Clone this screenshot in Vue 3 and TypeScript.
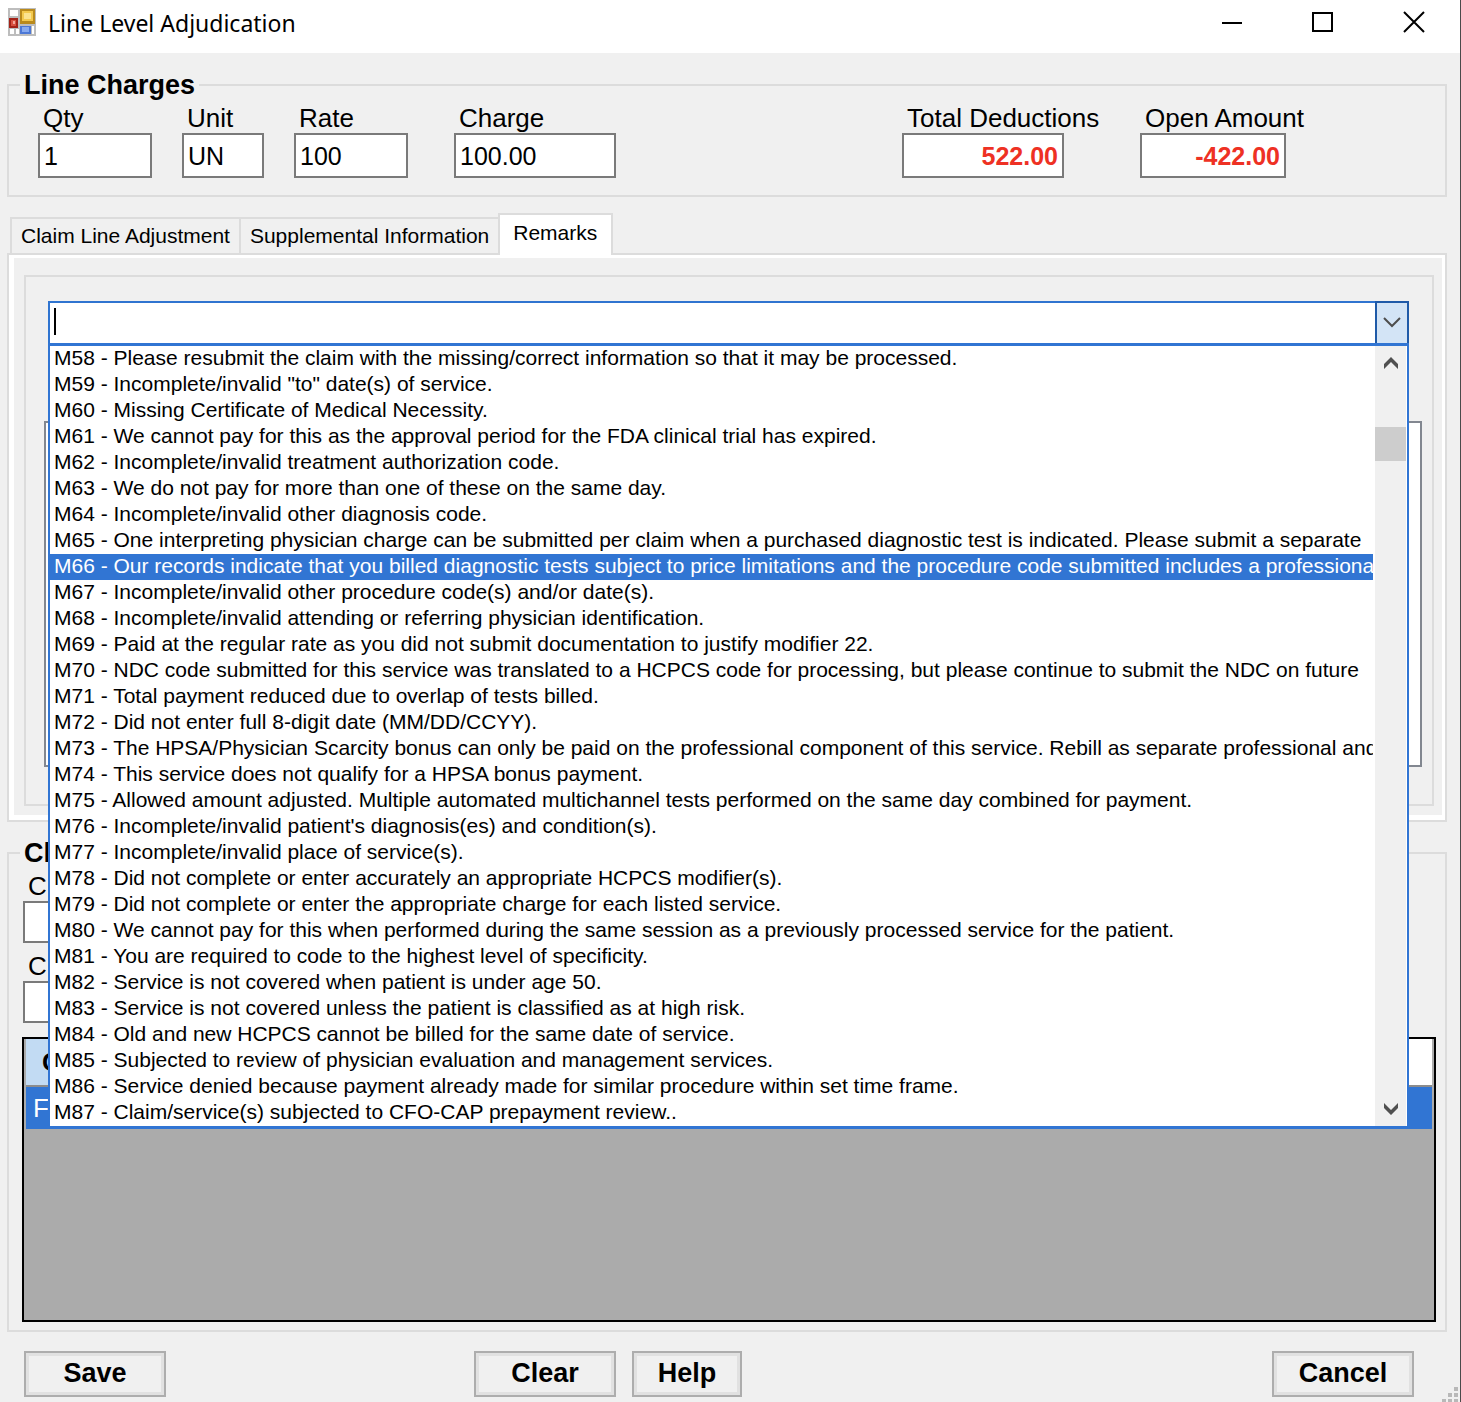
<script setup lang="ts">
import { ref } from 'vue'

interface Field {
  id: string
  label: string
  value: string
  size: string
}

const charges: Field[] = [
  { id: 'qty', label: 'Qty', value: '1', size: 'medium' },
  { id: 'unit', label: 'Unit', value: 'UN', size: 'small' },
  { id: 'rate', label: 'Rate', value: '100', size: 'medium spaced' },
  { id: 'charge', label: 'Charge', value: '100.00', size: 'large' },
]

const totals: Field[] = [
  { id: 'deductions', label: 'Total Deductions', value: '522.00', size: 'large' },
  { id: 'open', label: 'Open Amount', value: '-422.00', size: 'total' },
]

const tabs: string[] = ['Claim Line Adjustment', 'Supplemental Information', 'Remarks']
const activeTab = ref('Remarks')

const remarks: string[] = [
  'M58 - Please resubmit the claim with the missing/correct information so that it may be processed.',
  'M59 - Incomplete/invalid "to" date(s) of service.',
  'M60 - Missing Certificate of Medical Necessity.',
  'M61 - We cannot pay for this as the approval period for the FDA clinical trial has expired.',
  'M62 - Incomplete/invalid treatment authorization code.',
  'M63 - We do not pay for more than one of these on the same day.',
  'M64 - Incomplete/invalid other diagnosis code.',
  'M65 - One interpreting physician charge can be submitted per claim when a purchased diagnostic test is indicated. Please submit a separate',
  'M66 - Our records indicate that you billed diagnostic tests subject to price limitations and the procedure code submitted includes a professional',
  'M67 - Incomplete/invalid other procedure code(s) and/or date(s).',
  'M68 - Incomplete/invalid attending or referring physician identification.',
  'M69 - Paid at the regular rate as you did not submit documentation to justify modifier 22.',
  'M70 - NDC code submitted for this service was translated to a HCPCS code for processing, but please continue to submit the NDC on future',
  'M71 - Total payment reduced due to overlap of tests billed.',
  'M72 - Did not enter full 8-digit date (MM/DD/CCYY).',
  'M73 - The HPSA/Physician Scarcity bonus can only be paid on the professional component of this service. Rebill as separate professional and',
  'M74 - This service does not qualify for a HPSA bonus payment.',
  'M75 - Allowed amount adjusted. Multiple automated multichannel tests performed on the same day combined for payment.',
  "M76 - Incomplete/invalid patient's diagnosis(es) and condition(s).",
  'M77 - Incomplete/invalid place of service(s).',
  'M78 - Did not complete or enter accurately an appropriate HCPCS modifier(s).',
  'M79 - Did not complete or enter the appropriate charge for each listed service.',
  'M80 - We cannot pay for this when performed during the same session as a previously processed service for the patient.',
  'M81 - You are required to code to the highest level of specificity.',
  'M82 - Service is not covered when patient is under age 50.',
  'M83 - Service is not covered unless the patient is classified as at high risk.',
  'M84 - Old and new HCPCS cannot be billed for the same date of service.',
  'M85 - Subjected to review of physician evaluation and management services.',
  'M86 - Service denied because payment already made for similar procedure within set time frame.',
  'M87 - Claim/service(s) subjected to CFO-CAP prepayment review..',
]
const selected = ref(8)
</script>

<template>
  <div class="window">
    <header class="titlebar">
      <svg class="app-icon" width="28" height="28" viewBox="0 0 28 28" aria-hidden="true">
        <rect width="28" height="28" fill="#bdbdbd" />
        <rect x="2" y="2" width="8" height="6" fill="#fff" />
        <rect x="2" y="21" width="4" height="5" fill="#fff" />
        <rect x="8" y="21" width="3" height="5" fill="#fff" />
        <rect x="24" y="18" width="2" height="8" fill="#fff" />
        <rect x="12" y="1" width="15" height="15" fill="#b98a1c" />
        <rect x="14" y="3" width="11" height="10" fill="#f3c94e" />
        <rect x="16" y="5" width="7" height="6" fill="#fbe390" />
        <rect x="1" y="10" width="9" height="10" fill="#a32318" />
        <rect x="3" y="12" width="5" height="6" fill="#d8503f" />
        <rect x="5" y="13" width="2" height="3" fill="#f3a79a" />
        <rect x="12" y="18" width="11" height="8" fill="#4c78d6" />
        <rect x="14" y="19" width="7" height="5" fill="#86a9ef" />
      </svg>
      <h1>Line Level Adjudication</h1>
      <div class="controls">
        <button type="button" aria-label="Minimize">
          <svg width="22" height="24" viewBox="0 0 22 24"><path d="M1 13H21" stroke="#000" stroke-width="2" /></svg>
        </button>
        <button type="button" aria-label="Maximize">
          <svg width="22" height="24" viewBox="0 0 22 24"><rect x="1" y="3" width="19" height="18" fill="none" stroke="#000" stroke-width="2" /></svg>
        </button>
        <button type="button" aria-label="Close">
          <svg width="22" height="24" viewBox="0 0 22 24"><path d="M1 2L21 22M21 2L1 22" stroke="#000" stroke-width="2" /></svg>
        </button>
      </div>
    </header>

    <main>
      <fieldset class="group charges">
        <legend>Line Charges</legend>
        <div class="field-row">
          <div v-for="f in charges" :key="f.id" class="field" :class="f.size">
            <label :for="f.id">{{ f.label }}</label>
            <input :id="f.id" type="text" :value="f.value" />
          </div>
          <div class="totals">
            <div v-for="f in totals" :key="f.id" class="field" :class="f.size">
              <label :for="f.id">{{ f.label }}</label>
              <input :id="f.id" class="amount" type="text" :value="f.value" readonly />
            </div>
          </div>
        </div>
      </fieldset>

      <div class="tabs" role="tablist">
        <button
          v-for="t in tabs"
          :key="t"
          type="button"
          role="tab"
          :aria-selected="t === activeTab"
          :class="{ active: t === activeTab }"
          @click="activeTab = t"
        >{{ t }}</button>
      </div>

      <section class="panel" role="tabpanel">
        <div class="remarks">
          <div class="combo">
            <input type="text" aria-label="Remark code" />
            <span class="caret"></span>
            <button type="button" aria-label="Show remark codes">
              <svg width="18" height="12" viewBox="0 0 18 12"><path d="M1 1L9 9L17 1" fill="none" stroke="#4d4d4d" stroke-width="2" /></svg>
            </button>
            <div class="dropdown">
              <select v-model="selected" size="30" aria-label="Remark codes">
                <option v-for="(r, i) in remarks" :key="i" :value="i">{{ r }}</option>
              </select>
              <div class="scrollbar">
                <svg width="16" height="14" viewBox="0 0 16 14"><path d="M1 8L8 1L15 8V13L8 6L1 13Z" fill="#505050" /></svg>
                <div class="track"><div class="thumb"></div></div>
                <svg width="16" height="14" viewBox="0 0 16 14"><path d="M1 6L8 13L15 6V1L8 8L1 1Z" fill="#505050" /></svg>
              </div>
            </div>
          </div>
          <div class="remark-list"></div>
        </div>
      </section>

      <fieldset class="group claim">
        <legend>Cl</legend>
        <div class="claim-field">
          <label for="claim-a">C</label>
          <input id="claim-a" type="text" />
        </div>
        <div class="claim-field">
          <label for="claim-b">C</label>
          <input id="claim-b" type="text" />
        </div>
        <div class="grid">
          <table>
            <thead>
              <tr><th class="sorted" scope="col">C</th><th></th></tr>
            </thead>
            <tbody>
              <tr><td>F</td><td></td></tr>
            </tbody>
          </table>
        </div>
      </fieldset>

      <footer class="actions">
        <button type="button">Save</button>
        <div class="middle">
          <button type="button">Clear</button>
          <button type="button" class="narrow">Help</button>
        </div>
        <button type="button">Cancel</button>
      </footer>
    </main>
    <svg class="grip" width="18" height="16" viewBox="0 0 18 16" aria-hidden="true">
      <path d="M13 1h4v4h-4zM7 7h4v4H7zM13 7h4v4h-4zM1 13h4v3H1zM7 13h4v3H7zM13 13h4v3h-4z" fill="#b8b8b8" />
    </svg>
  </div>
</template>

<style>
body {
  background: #f0f0f0;
}
</style>

<style scoped>
* {
  box-sizing: border-box;
}

.window {
  position: relative;
  min-height: 100vh;
  border-right: 1px solid #4a4a4a;
  background: #f0f0f0;
  color: #000;
  font: 26px/30px "Liberation Sans", Arial, sans-serif;
}

button,
input,
select {
  margin: 0;
  border-radius: 0;
  color: inherit;
  font: inherit;
  outline: none;
}

.titlebar {
  display: flex;
  align-items: flex-start;
  height: 53px;
  padding: 8px 35px 0 8px;
  background: #fff;
}

.titlebar h1 {
  margin: 0 0 0 12px;
  font: 23px/30px "Noto Sans", "Open Sans", sans-serif;
}

.controls {
  display: flex;
  gap: 69px;
  margin-left: auto;
}

.controls button {
  width: 22px;
  height: 28px;
  padding: 2px 0;
  border: 0;
  background: none;
}

.controls svg {
  display: block;
}

main {
  padding: 17px 13px 5px 7px;
}

.group {
  min-width: 0;
  margin: 0;
  padding: 3px 9px 0 11px;
  border: 2px solid #dcdcdc;
}

legend {
  padding: 0 4px;
  font-size: 27px;
  font-weight: bold;
}

.charges {
  padding-bottom: 17px;
}

.field-row {
  display: flex;
  gap: 30px;
  padding-left: 18px;
}

.field label {
  display: block;
  padding-left: 5px;
  white-space: nowrap;
}

.field input,
.claim-field input {
  display: block;
  width: 100%;
  height: 45px;
  padding: 1px 4px 0;
  border: 2px solid #7a7a7a;
  background: #fff;
  font-size: 25px;
}

.field .amount {
  color: #ee3124;
  font-weight: bold;
  text-align: right;
}

.small {
  width: 82px;
}

.medium {
  width: 114px;
}

.large {
  width: 162px;
}

.total {
  width: 146px;
}

.spaced {
  margin-right: 16px;
}

.totals {
  display: flex;
  gap: 76px;
  margin: 0 150px 0 auto;
}

.tabs {
  display: flex;
  align-items: flex-end;
  height: 42px;
  margin: 16px 0 0 3px;
}

.tabs button {
  height: 38px;
  padding: 0 9px;
  border: 2px solid #dcdcdc;
  border-right-width: 0;
  background: #f0f0f0;
  font-size: 21px;
  white-space: nowrap;
}

.tabs .active {
  position: relative;
  height: 42px;
  padding: 0 14px 4px 13px;
  border-right-width: 2px;
  border-bottom: 0;
  background: #fff;
}

.panel {
  margin-top: -2px;
  padding: 3px 3px 5px 5px;
  border: 2px solid #dcdcdc;
  background: #fff;
}

.remarks {
  padding: 26px 25px 39px 24px;
  border: 8px solid #f0f0f0;
  border-width: 17px 8px 9px 10px;
  background: #f0f0f0;
  box-shadow: inset 0 0 0 2px #dcdcdc;
}

.combo {
  position: relative;
  display: flex;
  height: 44px;
}

.combo > input {
  flex: 1;
  min-width: 0;
  padding: 0 6px;
  border: 2px solid #2f74d0;
  background: #fff;
}

.caret {
  position: absolute;
  top: 7px;
  left: 6px;
  width: 2px;
  height: 27px;
  background: #000;
}

.combo > button {
  width: 34px;
  margin-left: -2px;
  padding: 0;
  border: 2px solid #1f5aa8;
  background: #d3e4f6;
}

.combo > button svg {
  display: block;
  margin: 0 auto;
}

.dropdown {
  position: absolute;
  z-index: 2;
  top: 42px;
  right: 0;
  left: 0;
  display: flex;
  padding-right: 1px;
  border: 2px solid #3175d3;
  border-top-width: 3px;
  background: #fff;
}

.dropdown select {
  flex: 1;
  min-width: 0;
  height: 780px;
  padding: 0 2px 0 0;
  border: 0;
  background: #fff;
  font-size: 21px;
  line-height: 26px;
  overflow: hidden;
  appearance: none;
}

.dropdown option {
  height: 26px;
  padding: 0 4px;
  overflow: hidden;
  line-height: 26px;
}

.dropdown option:checked {
  background: linear-gradient(#3175d3, #3175d3);
  -webkit-text-fill-color: #fff;
}

.scrollbar {
  display: flex;
  flex-direction: column;
  align-items: center;
  width: 31px;
  padding: 10px 0;
  background: #f0f0f0;
}

.track {
  flex: 1;
  width: 100%;
  padding-top: 57px;
}

.thumb {
  height: 34px;
  background: #cdcdcd;
}

.remark-list {
  height: 346px;
  margin: 76px -13px 0 -4px;
  border: 2px solid #828790;
  background: #fff;
}

.claim {
  margin-top: 16px;
  padding-bottom: 8px;
}

.claim-field {
  width: 162px;
  margin-left: 3px;
}

.claim-field + .claim-field {
  margin-top: 8px;
}

.claim-field label {
  display: block;
  padding-left: 5px;
}

.claim-field input {
  height: 42px;
}

.grid {
  height: 285px;
  margin: 14px 0 0 2px;
  padding: 0 2px;
  border: 2px solid #000;
  background: #ababab;
}

table {
  width: 100%;
  border-collapse: separate;
  border-spacing: 0;
  table-layout: fixed;
}

th {
  height: 48px;
  padding: 0 16px;
  border-bottom: 2px solid #8c8c8c;
  background: #fff;
  text-align: left;
}

.sorted {
  background: #c2dbf3;
}

td {
  height: 42px;
  padding: 0 7px;
  background: #3175d3;
  color: #fff;
}

.actions {
  display: flex;
  justify-content: space-between;
  margin-top: 19px;
  padding: 0 33px 0 17px;
}

.actions button {
  width: 142px;
  height: 46px;
  padding: 0 0 2px;
  border: 2px solid #adadad;
  background: #f0f0f0;
  box-shadow: inset 0 0 0 3px #e1e1e1;
  font-size: 27px;
  font-weight: bold;
}

.middle {
  display: flex;
  gap: 16px;
  margin-right: 222px;
}

.actions .narrow {
  width: 110px;
}

.grip {
  position: absolute;
  right: 1px;
  bottom: 0;
}
</style>
